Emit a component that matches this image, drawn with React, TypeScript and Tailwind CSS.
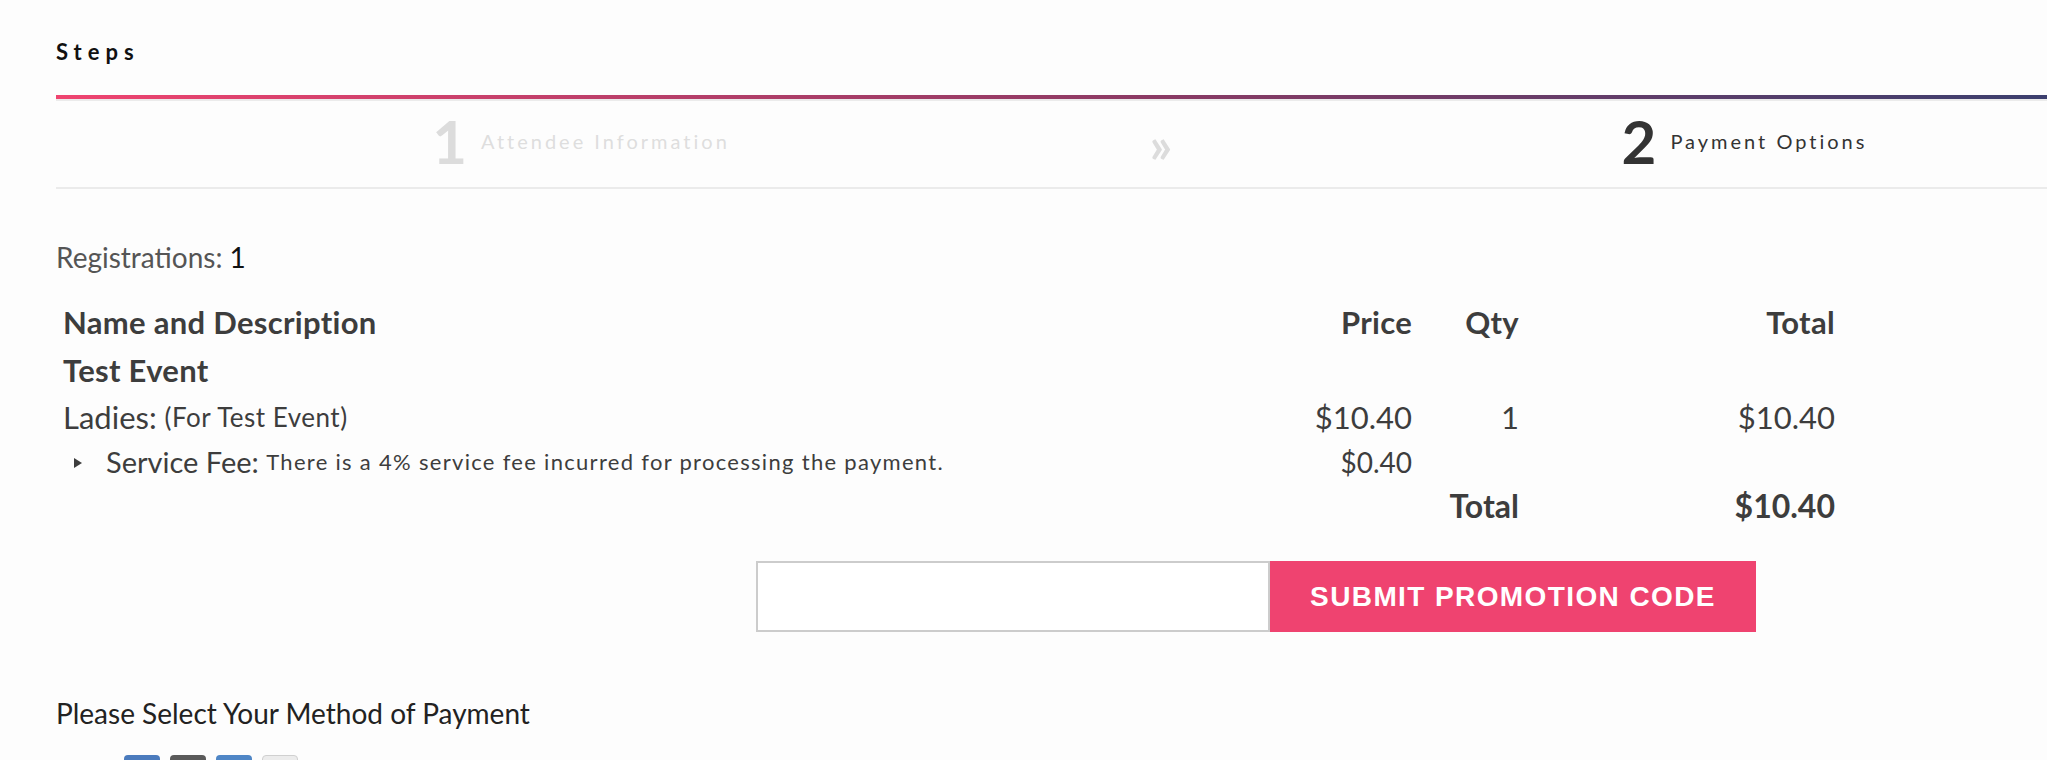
const rowText = "flex items-center";

const PaymentIcon = ({ className }: { className: string }) => (
  <div className={`h-[26px] w-[36px] rounded-[4px] ${className}`} />
);

export default function App() {
  return (
    <div className="min-h-[760px] w-full overflow-hidden bg-[#fdfdfd] font-['Lato','Liberation_Sans',sans-serif] text-[#3d3d3d]">
      <div className="ml-[56px]">
        <h2 className="pt-[36px] pb-[27px] text-[22px] font-bold leading-[32px] tracking-[6px] text-[#111]">
          Steps
        </h2>
        <div className="h-[4px] bg-[linear-gradient(to_right,#ef4470,#8b3a64_55%,#3c3f6e)]" />

        {/* steps */}
        <div className="flex h-[90px] items-center border-y-2 border-[#ebebeb]">
          <div className="mb-[7px] flex w-[1050px] items-center justify-center gap-[14px]">
            <span className="text-[60px] font-bold leading-none text-[#dcdcdc]">1</span>
            <span className="text-[20px] tracking-[3px] text-[#dedede]">Attendee Information</span>
          </div>
          <div className="flex w-[110px] justify-center text-[50px] font-bold leading-none text-[#dcdcdc]">
            »
          </div>
          <div className="mb-[7px] flex flex-1 items-center justify-center gap-[14px] pl-[226px]">
            <span className="text-[60px] font-bold leading-none text-[#333]">2</span>
            <span className="text-[20px] tracking-[3px] text-[#333]">Payment Options</span>
          </div>
        </div>

        <p className="mt-[50px] text-[28px] leading-[36px] text-[#555]">
          Registrations: <span className="text-[#111]">1</span>
        </p>

        {/* order table */}
        <div className="mt-[23px] ml-[7px] grid w-[1772px] grid-cols-[1199px_150px_107px_316px] leading-[1.2]">
          <div className={`${rowText} h-[49px] text-[31px] font-bold tracking-[0.3px]`}>Name and Description</div>
          <div className={`${rowText} justify-end text-[31px] font-bold tracking-[0.3px]`}>Price</div>
          <div className={`${rowText} justify-end text-[31px] font-bold tracking-[0.3px]`}>Qty</div>
          <div className={`${rowText} justify-end text-[31px] font-bold tracking-[0.3px]`}>Total</div>

          <div className={`${rowText} col-span-4 h-[48px] text-[31px] font-bold tracking-[0.3px]`}>Test Event</div>

          <div className={`${rowText} h-[46px] text-[31px]`}>
            Ladies:&nbsp;<span className="text-[26px] tracking-[0.5px]">(For Test Event)</span>
          </div>
          <div className={`${rowText} justify-end text-[31px]`}>$10.40</div>
          <div className={`${rowText} justify-end text-[31px]`}>1</div>
          <div className={`${rowText} justify-end text-[31px]`}>$10.40</div>

          <div className={`${rowText} h-[43px] pl-[10px] text-[29px]`}>
            <svg width="10" height="10" viewBox="0 0 10 10" className="mr-[23px]">
              <polygon points="1,0 9,5 1,10" fill="#3d3d3d" />
            </svg>
            Service Fee:&nbsp;
            <span className="text-[22px] tracking-[1.3px]">
              There is a 4% service fee incurred for processing the payment.
            </span>
          </div>
          <div className={`${rowText} justify-end text-[28px]`}>$0.40</div>
          <div />
          <div />

          <div className="h-[44px]" />
          <div />
          <div className={`${rowText} justify-end text-[32px] font-bold`}>Total</div>
          <div className={`${rowText} justify-end text-[32px] font-bold`}>$10.40</div>
        </div>

        {/* promotion code */}
        <div className="mt-[33px] ml-[700px] flex h-[71px]">
          <input type="text" className="h-full w-[514px] border-2 border-[#cccccc] bg-white outline-none" />
          <button className="h-full w-[486px] bg-[#ef4370] font-['Liberation_Sans',Arial,sans-serif] text-[28px] font-bold tracking-[1.4px] text-white">
            SUBMIT PROMOTION CODE
          </button>
        </div>

        <p className="mt-[63px] text-[28px] leading-[36px] text-[#222]">Please Select Your Method of Payment</p>

        <div className="mt-[24px] ml-[68px] flex gap-[10px]">
          <PaymentIcon className="bg-[#4b7bbd]" />
          <PaymentIcon className="bg-[#5a5a5a]" />
          <PaymentIcon className="bg-[#4f86c6]" />
          <PaymentIcon className="border border-[#d0d0d0] bg-[#ececec]" />
        </div>
      </div>
    </div>
  );
}
